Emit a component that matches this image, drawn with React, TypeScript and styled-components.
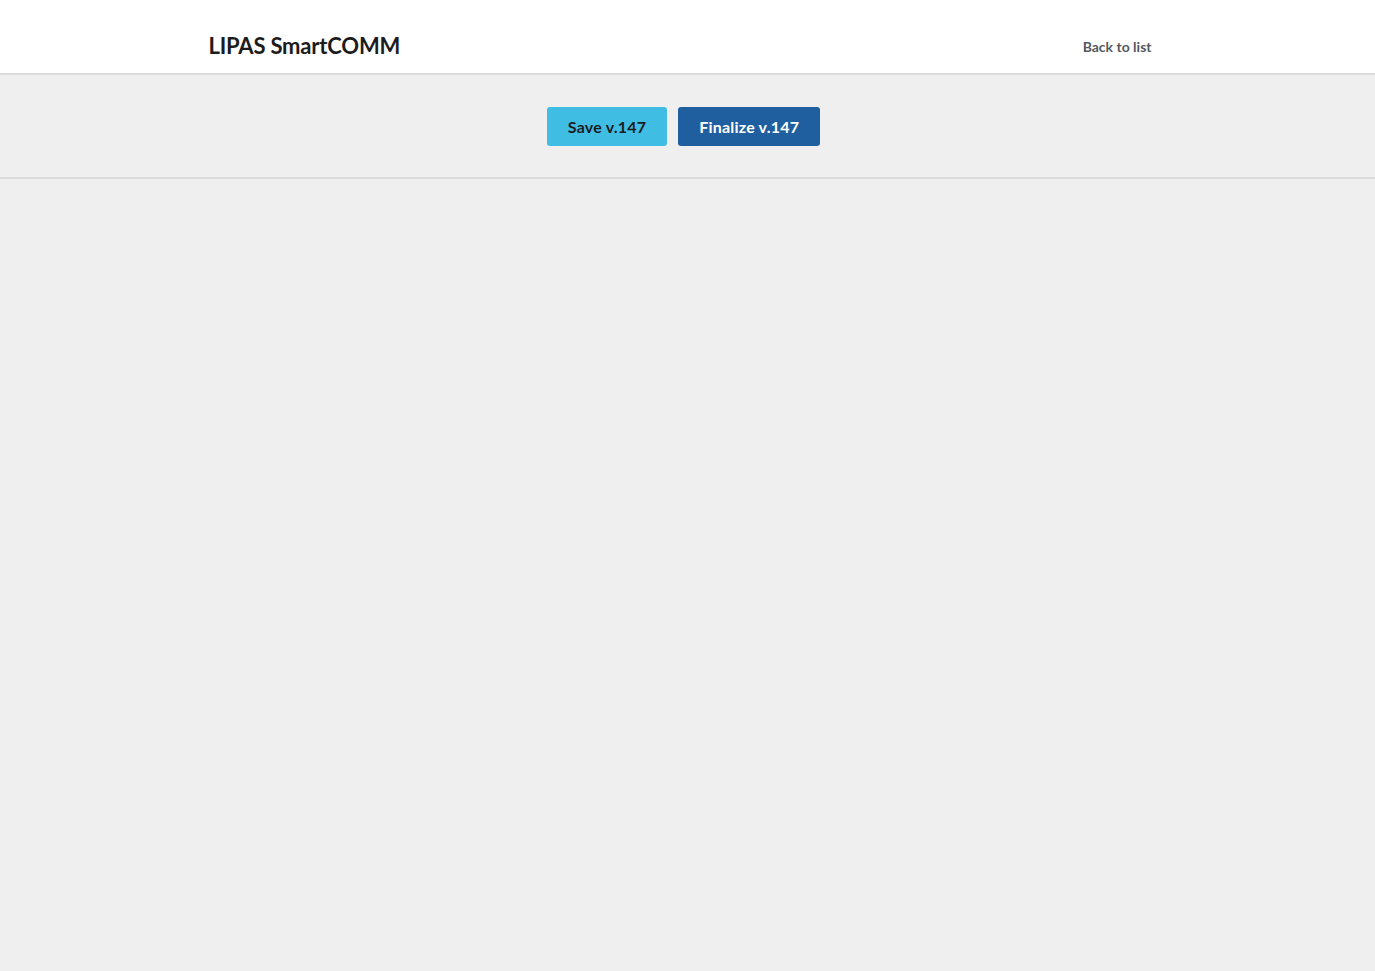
import React from "react";
import styled, { createGlobalStyle } from "styled-components";

const GlobalStyle = createGlobalStyle`
  html, body {
    margin: 0;
    padding: 0;
    background: #efefef;
    font-family: Lato, "Open Sans", "Liberation Sans", sans-serif;
  }
  #root {
    min-height: 100vh;
  }
`;

const Page = styled.div`
  min-height: 100vh;
  background: #efefef;
`;

const Header = styled.header`
  height: 73px;
  background: #ffffff;
  border-bottom: 2px solid #dcdcdc;
`;

const HeaderInner = styled.div`
  width: 960px;
  height: 100%;
  margin: 0 auto;
  display: flex;
  align-items: center;
  justify-content: space-between;
  box-sizing: border-box;
  padding: 18px 16px 0 1px;
`;

const Brand = styled.h1`
  margin: 0;
  font-size: 22px;
  font-weight: 700;
  color: #1c1c1c;
  letter-spacing: -0.2px;
`;

const BackLink = styled.a`
  font-size: 14px;
  font-weight: 700;
  color: #545960;
  text-decoration: none;
  margin-top: 1px;
  cursor: pointer;
`;

const Toolbar = styled.div`
  height: 104px;
  border-bottom: 2px solid #dcdcdc;
  display: flex;
  justify-content: center;
  align-items: flex-start;
  gap: 11px;
  padding-top: 32px;
  padding-right: 8px;
  box-sizing: border-box;
`;

const ActionButton = styled.button<{ $primary?: boolean }>`
  height: 39px;
  padding: 0 21px;
  border: none;
  border-radius: 3px;
  font-family: inherit;
  font-size: 16px;
  font-weight: 700;
  letter-spacing: 0.2px;
  cursor: pointer;
  background: ${(p) => (p.$primary ? "#1f5fa0" : "#3fbde3")};
  color: ${(p) => (p.$primary ? "#ffffff" : "#1c1c1c")};
`;

export default function App() {
  return (
    <Page>
      <GlobalStyle />
      <Header>
        <HeaderInner>
          <Brand>LIPAS SmartCOMM</Brand>
          <BackLink>Back to list</BackLink>
        </HeaderInner>
      </Header>
      <Toolbar>
        <ActionButton>Save v.147</ActionButton>
        <ActionButton $primary>Finalize v.147</ActionButton>
      </Toolbar>
    </Page>
  );
}
